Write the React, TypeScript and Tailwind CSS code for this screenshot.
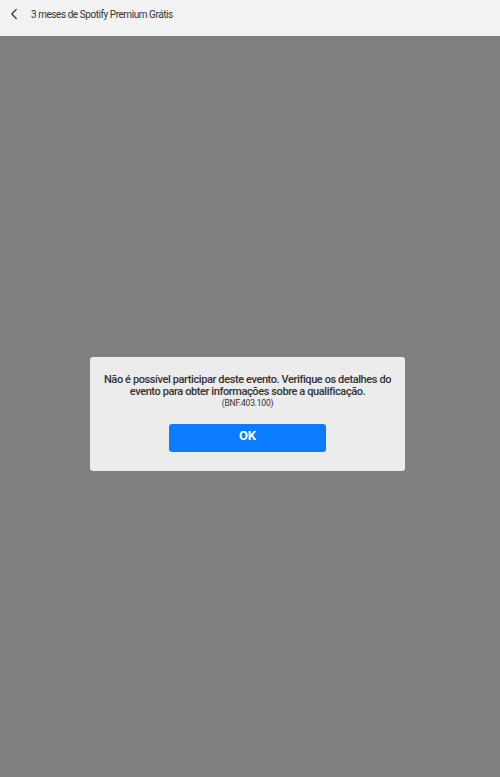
import { ChevronLeft } from 'lucide-react';

export default function App() {
  return (
    <div className="w-[500px] h-[777px] flex flex-col bg-[#808080]" style={{ fontFamily: 'Roboto, "Noto Sans", sans-serif' }}>
      <div className="h-[36px] bg-[#f2f2f2] flex items-center pl-[5px] shrink-0">
        <ChevronLeft size={18} strokeWidth={1.6} className="text-[#333] mb-[8px]" />
        <span className="ml-[8px] mb-[8px] text-[10px] text-[#333] tracking-[-0.45px]">3 meses de Spotify Premium Grátis</span>
      </div>
      <div className="flex-1 pt-[321px] pl-[90px]">
        <div className="w-[315px] h-[114px] bg-[#ececec] rounded-[3px] flex flex-col items-center pt-[17px]">
          <p className="text-[11px] leading-[12px] font-medium text-[#333] text-center px-[6px] tracking-[-0.4px]">
            Não é possível participar deste evento. Verifique os detalhes do evento para obter informações sobre a qualificação.
          </p>
          <p className="text-[8.5px] leading-[11px] text-[#333] tracking-[-0.2px]">(BNF.403.100)</p>
          <button className="mt-[15px] w-[157px] h-[28px] bg-[#0a7cff] rounded-[3px] text-white font-bold text-[13px] pb-[4px]">OK</button>
        </div>
      </div>
    </div>
  );
}
